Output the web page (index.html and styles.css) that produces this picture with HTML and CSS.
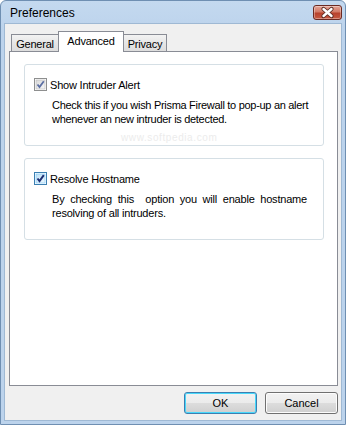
FILE: index.html
```html
<!DOCTYPE html>
<html>
<head>
<meta charset="utf-8">
<link rel="stylesheet" href="styles.css">
</head>
<body>
<div class="window">
  <div class="titlebar">
    <span class="title">Preferences</span>
    <span class="close">
      <svg width="27" height="13" viewBox="0 0 27 13">
        <path d="M9.5 3 L17.5 10 M17.5 3 L9.5 10" stroke="#5a2a22" stroke-width="4.2" stroke-linecap="round"/>
        <path d="M9.5 3 L17.5 10 M17.5 3 L9.5 10" stroke="#ffffff" stroke-width="2.4" stroke-linecap="round"/>
      </svg>
    </span>
  </div>
  <div class="client">
    <div class="tabs">
      <div class="tab tab-general">General</div>
      <div class="tab tab-selected">Advanced</div>
      <div class="tab tab-privacy">Privacy</div>
    </div>
    <div class="panel">
      <div class="group">
        <div class="check">
          <svg class="box" width="13" height="13" viewBox="0 0 13 13">
            <defs>
              <linearGradient id="g1" x1="0" y1="0" x2="1" y2="1">
                <stop offset="0" stop-color="#d9d9d9"/>
                <stop offset="1" stop-color="#f7f7f7"/>
              </linearGradient>
            </defs>
            <rect x="0.5" y="0.5" width="12" height="12" fill="#fff" stroke="#8e8f8f"/>
            <rect x="2" y="2" width="9" height="9" fill="url(#g1)" stroke="#b9b9b9" stroke-width="0.6"/>
            <path d="M3.5 6.5 L5.5 9 L9.8 3.2" fill="none" stroke="#5c6fa3" stroke-width="1.8"/>
          </svg>
          <span>Show Intruder Alert</span>
        </div>
        <p class="desc desc-1">Check this if you wish Prisma Firewall to pop-up an alert whenever an new intruder is detected.</p>
        <div class="watermark">www.softpedia.com</div>
      </div>
      <div class="group">
        <div class="check">
          <svg class="box" width="13" height="13" viewBox="0 0 13 13">
            <defs>
              <linearGradient id="g2" x1="0" y1="0" x2="1" y2="1">
                <stop offset="0" stop-color="#bde0f6"/>
                <stop offset="1" stop-color="#eef8fd"/>
              </linearGradient>
            </defs>
            <rect x="0.5" y="0.5" width="12" height="12" fill="#fff" stroke="#3c7fb1"/>
            <rect x="2" y="2" width="9" height="9" fill="url(#g2)" stroke="#79c6f9" stroke-width="0.6"/>
            <path d="M3.5 6.5 L5.5 9 L9.8 3.2" fill="none" stroke="#1d2e73" stroke-width="2"/>
          </svg>
          <span>Resolve Hostname</span>
        </div>
        <p class="desc desc-2">By checking this&nbsp; option you will enable hostname resolving of all intruders.</p>
      </div>
    </div>
    <div class="buttons">
      <div class="btn btn-default">OK</div>
      <div class="btn">Cancel</div>
    </div>
  </div>
</div>
</body>
</html>
```
FILE: styles.css
```css
* { box-sizing: border-box; }
html, body { margin: 0; padding: 0; }
body {
  font-family: "Liberation Sans", Arial, sans-serif;
  font-size: 11px;
  letter-spacing: -0.2px;
  color: #000;
  background: #fff;
}
.window {
  width: 346px;
  height: 425px;
  display: flex;
  flex-direction: column;
  background: linear-gradient(#c4d9ef, #bcd3ec 30px, #bcd3ec);
  border: 1px solid #6f8fb2;
  border-radius: 6px 6px 0 0;
  padding: 0 3px 3px 3px;
}
.titlebar {
  height: 22px;
  display: flex;
  align-items: center;
  justify-content: space-between;
  padding: 0 0 0 6px;
}
.title {
  font-size: 12px;
  letter-spacing: 0;
  padding-top: 2px;
}
.close {
  width: 29px;
  height: 15px;
  margin-top: 1px;
  border: 1px solid #6b2a22;
  border-radius: 3px;
  background: linear-gradient(#e5a597, #d27a66 45%, #b8422d 55%, #c75a42);
  display: flex;
  align-items: center;
  justify-content: center;
  box-shadow: inset 0 0 0 1px rgba(255,255,255,0.35);
}
.close svg { display: block; }
.client {
  flex: 1;
  background: #f0f0f0;
  border: 1px solid #9fb9d4;
  display: flex;
  flex-direction: column;
  padding: 6px 3px 6px 4px;
}
.tabs {
  display: flex;
  align-items: flex-end;
  padding-left: 2px;
  height: 21px;
}
.tab {
  height: 17px;
  border: 1px solid #898c95;
  border-bottom: none;
  background: linear-gradient(#f3f3f3, #e6e6e6 50%, #dddddd);
  margin-right: -1px;
  display: flex;
  align-items: center;
  justify-content: center;
  padding-top: 1px;
}
.tab-general { width: 48px; }
.tab-privacy { width: 44px; }
.tab-selected {
  width: 66px;
  height: 21px;
  background: #fff;
  position: relative;
  z-index: 1;
  margin-bottom: -1px;
  padding-top: 0;
  padding-bottom: 3px;
}
.panel {
  height: 335px;
  background: #fff;
  border: 1px solid #898c95;
  padding: 12px 13px 0 14px;
  display: flex;
  flex-direction: column;
  gap: 12px;
}
.group {
  height: 82px;
  border: 1px solid #d5dfe5;
  border-radius: 3px;
  padding: 13px 10px 0 9px;
  position: relative;
}
.check {
  display: flex;
  align-items: center;
  gap: 3px;
  height: 13px;
}
.box { display: block; flex: none; }
.desc {
  margin: 7px 0 0 18px;
  line-height: 14px;
}
.desc-1 { width: 268px; letter-spacing: -0.3px; }
.desc-2 { width: 255px; text-align: justify; }
.watermark {
  position: absolute;
  left: 96px;
  bottom: 2px;
  color: #ececec;
  font-size: 10px;
  letter-spacing: 0.6px;
}
.buttons {
  margin-top: auto;
  display: flex;
  justify-content: flex-end;
  gap: 8px;
}
.btn {
  width: 73px;
  height: 22px;
  border: 1px solid #707070;
  border-radius: 3px;
  background: linear-gradient(#f2f2f2, #ebebeb 50%, #dddddd 50%, #cfcfcf);
  box-shadow: inset 0 0 0 1px #fcfcfc;
  display: flex;
  align-items: center;
  justify-content: center;
  letter-spacing: 0;
}
.btn-default {
  border-color: #3c7fb1;
  box-shadow: inset 0 0 0 1px #48d8fb;
}
```
